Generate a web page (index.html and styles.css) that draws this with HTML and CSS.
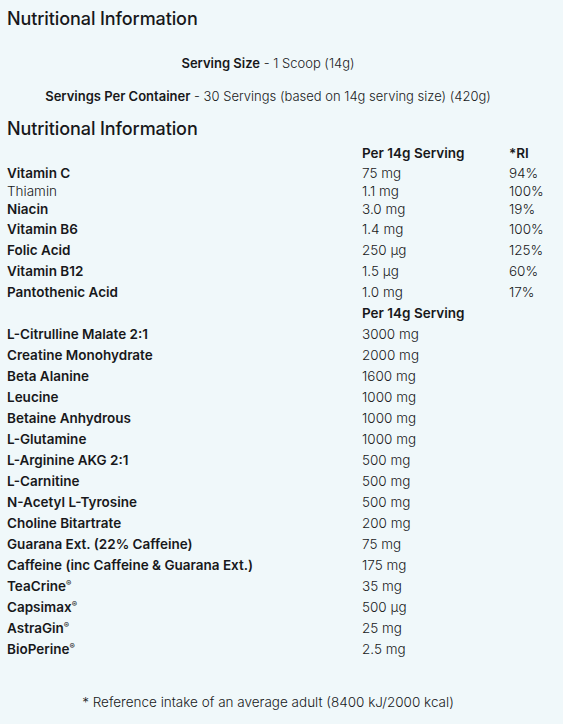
FILE: index.html
```html
<!DOCTYPE html>
<html lang="en">
<head>
<meta charset="utf-8">
<title>Nutritional Information</title>
<link rel="stylesheet" href="styles.css">
</head>
<body>
<div class="page">
  <h2 class="title">Nutritional Information</h2>
  <p class="serving"><strong>Serving Size</strong> - 1 Scoop (14g)</p>
  <p class="serving serving-2"><strong>Servings Per Container</strong> - 30 Servings (based on 14g serving size) (420g)</p>
  <h2 class="title title-2">Nutritional Information</h2>
  <table class="facts">
    <colgroup><col class="c1"><col class="c2"><col class="c3"></colgroup>
    <tr class="head"><td></td><td>Per 14g Serving</td><td>*RI</td></tr>
    <tr class="r19"><td class="b">Vitamin C</td><td>75 mg</td><td>94%</td></tr>
    <tr class="r17"><td>Thiamin</td><td>1.1 mg</td><td>100%</td></tr>
    <tr class="r19"><td class="b">Niacin</td><td>3.0 mg</td><td>19%</td></tr>
    <tr><td class="b">Vitamin B6</td><td>1.4 mg</td><td>100%</td></tr>
    <tr><td class="b">Folic Acid</td><td>250 µg</td><td>125%</td></tr>
    <tr><td class="b">Vitamin B12</td><td>1.5 µg</td><td>60%</td></tr>
    <tr><td class="b">Pantothenic Acid</td><td>1.0 mg</td><td>17%</td></tr>
    <tr class="head"><td></td><td>Per 14g Serving</td><td></td></tr>
    <tr><td class="b">L-Citrulline Malate 2:1</td><td>3000 mg</td><td></td></tr>
    <tr><td class="b">Creatine Monohydrate</td><td>2000 mg</td><td></td></tr>
    <tr><td class="b">Beta Alanine</td><td>1600 mg</td><td></td></tr>
    <tr><td class="b">Leucine</td><td>1000 mg</td><td></td></tr>
    <tr><td class="b">Betaine Anhydrous</td><td>1000 mg</td><td></td></tr>
    <tr><td class="b">L-Glutamine</td><td>1000 mg</td><td></td></tr>
    <tr><td class="b">L-Arginine AKG 2:1</td><td>500 mg</td><td></td></tr>
    <tr><td class="b">L-Carnitine</td><td>500 mg</td><td></td></tr>
    <tr><td class="b">N-Acetyl L-Tyrosine</td><td>500 mg</td><td></td></tr>
    <tr><td class="b">Choline Bitartrate</td><td>200 mg</td><td></td></tr>
    <tr><td class="b">Guarana Ext. (22% Caffeine)</td><td>75 mg</td><td></td></tr>
    <tr><td class="b">Caffeine (inc Caffeine &amp; Guarana Ext.)</td><td>175 mg</td><td></td></tr>
    <tr><td class="b">TeaCrine<sup>®</sup></td><td>35 mg</td><td></td></tr>
    <tr><td class="b">Capsimax<sup>®</sup></td><td>500 µg</td><td></td></tr>
    <tr><td class="b">AstraGin<sup>®</sup></td><td>25 mg</td><td></td></tr>
    <tr><td class="b">BioPerine<sup>®</sup></td><td>2.5 mg</td><td></td></tr>
  </table>
  <p class="note">* Reference intake of an average adult (8400 kJ/2000 kcal)</p>
</div>
</body>
</html>
```
FILE: styles.css
```css
html, body {
  margin: 0;
  padding: 0;
  background: #f0f8fa;
}
body {
  font-family: Inter, "Noto Sans", sans-serif;
  color: #18181b;
}
.page {
  padding: 0 34px 0 7px;
  width: 563px;
  box-sizing: border-box;
  height: 724px;
  overflow: hidden;
}
.title {
  margin: 0;
  padding-top: 8px;
  height: 22px;
  line-height: 22px;
  font-size: 18px;
  font-weight: 500;
  letter-spacing: -0.1px;
}
.title-2 {
  padding-top: 0;
}
.serving {
  margin: 0;
  text-align: center;
  font-size: 13px;
  font-weight: 300;
  line-height: 20px;
  padding-top: 23px;
}
.serving strong {
  font-weight: 600;
}
.serving-2 {
  padding-top: 13px;
  padding-bottom: 12px;
}
.facts {
  border-collapse: collapse;
  table-layout: fixed;
  width: 556px;
  margin-top: 3px;
  font-size: 13.5px;
}
.facts .c1 {
  width: 355px;
}
.facts .c2 {
  width: 147px;
}
.facts .c3 {
  width: 54px;
}
.facts td {
  padding: 0;
  height: 21px;
  line-height: 17px;
  font-weight: 300;
  vertical-align: middle;
  white-space: nowrap;
}
.facts .head td {
  font-weight: 600;
}
.facts .r19 td {
  height: 19px;
}
.facts .r17 td {
  height: 17px;
}
.facts td.b {
  font-weight: 600;
}
.facts sup {
  font-size: 8px;
  vertical-align: 5px;
  line-height: 0;
}
.note {
  margin: 0;
  padding-top: 32px;
  text-align: center;
  font-size: 13.5px;
  font-weight: 300;
  line-height: 20px;
}
```
